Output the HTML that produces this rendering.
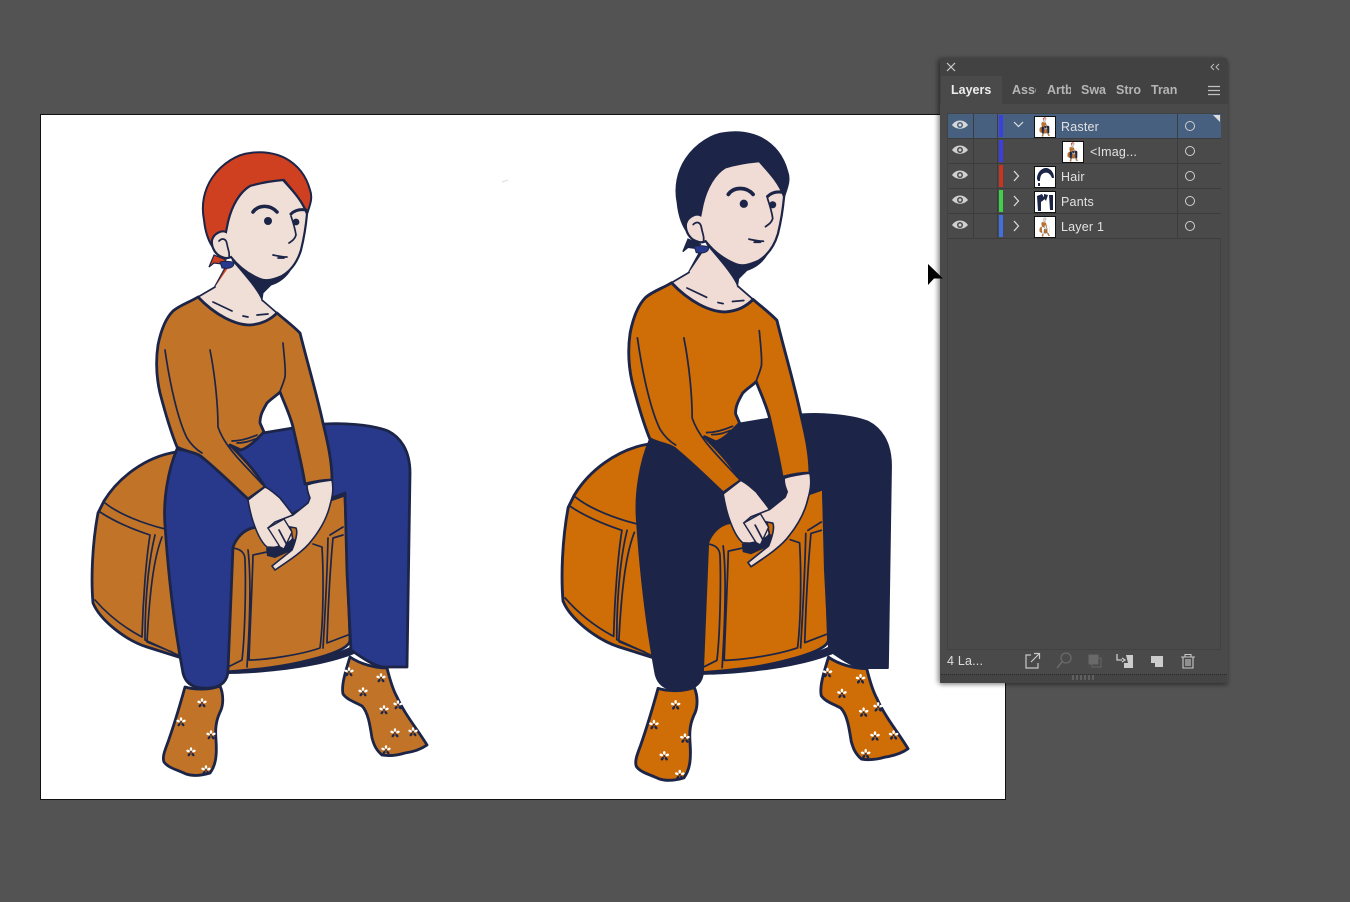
<!DOCTYPE html>
<html><head><meta charset="utf-8">
<style>
html,body{margin:0;padding:0;width:1350px;height:902px;overflow:hidden;background:#535353;font-family:"Liberation Sans",sans-serif}
#canvas{position:absolute;left:40px;top:114px;width:964px;height:684px;background:#fff;border:1px solid #111;box-sizing:content-box}
svg.art{position:absolute;left:0;top:0}
.ln{fill:none;stroke:#1c2548;stroke-width:1.7;stroke-linecap:round;stroke-linejoin:round}
.o{stroke:#1c2548;stroke-width:2.8;stroke-linejoin:round}
#panel{position:absolute;left:940px;top:58px;width:288px;height:625px;background:#4a4a4a;border-radius:4px 4px 0 0;box-shadow:-3px 0 5px rgba(0,0,0,.28),0 2px 4px rgba(0,0,0,.3)}
#head{position:absolute;left:0;top:0;width:288px;height:46px;background:#424242;border-radius:4px 4px 0 0}
#active{position:absolute;left:1px;top:18px;width:61px;height:30px;background:#4a4a4a;color:#eee;font-weight:bold;font-size:12.5px;line-height:28px;text-indent:10px}
.tab{position:absolute;top:18px;height:28px;line-height:28px;color:#b5b5b5;font-weight:bold;font-size:12.5px;overflow:hidden;white-space:nowrap}
.row{position:absolute;left:8px;width:273px;height:24px;background:#4a4a4a;border-bottom:1px solid #3c3c3c}
.row.sel{background:#47607f}
.cell{position:absolute;top:0;width:1px;height:24px;background:#3c3c3c}
.bar{position:absolute;left:51px;top:1px;width:4px;height:22px}
.name{position:absolute;top:1px;line-height:25px;font-size:12.5px;color:#e2e2e2;white-space:nowrap;letter-spacing:.2px}
.thumb{position:absolute;top:2px;width:20px;height:20px;background:#fff;border:1px solid #111;overflow:hidden}
.thumb svg{position:absolute;left:0;top:0}
.eye{position:absolute;left:3px;top:4px}
.vis{position:absolute;left:237px;top:7px;width:8px;height:8px;border:1px solid #d0d0d0;border-radius:50%}
.chev{position:absolute;top:6px}
</style></head>
<body>
<div id="canvas"></div>
<svg class="art" width="1350" height="902" viewBox="0 0 1350 902">
<defs>
<g id="fl">
<g fill="#fff">
<ellipse cx="0" cy="-3" rx="1.2" ry="1.8"/><ellipse cx="2.9" cy="-1" rx="1.2" ry="1.8" transform="rotate(70 2.9 -1)"/><ellipse cx="-2.9" cy="-1" rx="1.2" ry="1.8" transform="rotate(290 -2.9 -1)"/>
</g>
<g fill="#1c2548"><ellipse cx="1.9" cy="2.6" rx="1.2" ry="1.9" transform="rotate(144 1.9 2.6)"/><ellipse cx="-1.9" cy="2.6" rx="1.2" ry="1.9" transform="rotate(216 -1.9 2.6)"/><circle r=".9"/></g></g>
<g id="fig">
<!-- pouf -->
<path class="o" style="fill:var(--pf)" d="M176 452C145 457 118 478 104 501L98 513C92 545 91 580 93 603C100 620 125 640 147 647L182 658L176 452Z"/>
<path class="o" style="fill:var(--pf)" d="M232 548C236 535 243 531 250 528L345 495L350 640C350 648 330 655 310 660C280 668 250 670 226 672Z"/>
<path d="M226 672C260 669 320 662 352 646L354 654C320 668 260 674 226 674Z" fill="#1c2548"/>
<path class="ln" d="M105 503C120 515 145 524 165 529M100 512C115 522 135 530 150 535C146 560 143 600 142 637C125 628 108 615 95 600M155 535C150 555 145 590 145 640L178 655M162 537C155 555 150 583 147 642L172 652"/>
<path class="ln" stroke-width="2" d="M233 548C240 549 245 552 245 560C246 585 245 635 242 660L228 667M248 550C251 575 250 620 247 667M267 552L253 555C252 590 250 630 249 660C265 660 300 655 320 648C323 625 324 580 322 547L313 544M328 538C327 580 325 615 323 648M343 535L333 538C330 570 328 610 327 643L348 635M330 535L343 527"/>
<!-- pants -->
<path style="fill:var(--pt)" class="o" d="M177 449C168 470 163 500 165 525C168 570 174 625 183 673C186 685 195 689 210 688C222 687 228 680 228 670L233 547C237 536 245 530 252 528L270 525L300 510L345 493L347 573L351 650C365 660 375 666 383 667L407 667L410 473C410 450 400 437 388 431C370 424 340 423 325 424L293 428L263 433L240 450L200 453Z"/>
<!-- socks -->
<path class="o" style="fill:var(--pf)" d="M185 687C195 690 210 690 220 686C224 695 223 705 221 710C216 720 215 728 216 740C217 755 216 765 210 773C200 776 192 776 186 774C178 770 168 768 164 762C162 757 165 750 168 742C174 725 180 705 185 687Z"/>
<path class="o" style="fill:var(--pf)" d="M350 657C360 664 375 668 387 668C390 680 393 690 397 697C405 715 418 730 427 745C420 750 412 752 405 753C395 756 388 756 382 755C376 750 374 745 372 738C370 725 368 712 362 706C355 702 347 700 343 694C341 685 346 670 350 657Z"/>
<use href="#fl" x="202" y="703"/><use href="#fl" x="181" y="722"/><use href="#fl" x="211" y="735"/><use href="#fl" x="191" y="752"/><use href="#fl" x="206" y="770"/><use href="#fl" x="349" y="672"/><use href="#fl" x="381" y="678"/><use href="#fl" x="363" y="692"/><use href="#fl" x="384" y="710"/><use href="#fl" x="398" y="705"/><use href="#fl" x="395" y="733"/><use href="#fl" x="413" y="732"/><use href="#fl" x="386" y="750"/>
<!-- tail -->
<path d="M215 286L226 266L233 268C228 276 222 282 218 287Z" style="fill:var(--hr)" stroke="#1c2548" stroke-width="1.2"/>
<path d="M209 267L214 255L226 260L222 264L214 263Z" style="fill:var(--hr)" stroke="#1c2548" stroke-width="1.2"/>
<!-- neck -->
<path d="M198 297L215 287L230 265L240 262L268 285L262 293L262 300L277 313L262 323L240 325L220 315Z" style="fill:var(--sk)"/>
<path d="M232 260C243 272 255 281 267 281C276 280 284 276 291 269C286 278 278 283 271 285L263 293L262 300C258 290 245 275 232 260Z" fill="#1c2548" stroke="#1c2548"/>
<path class="ln" d="M262 300L277 313M198 297L215 287"/>
<path d="M220 262C224 261 232 261 234 263C234 268 228 269 222 268Z" fill="#28398c" stroke="#1c2548"/>
<!-- shirt -->
<path class="o" style="fill:var(--pf2)" d="M198 297C190 302 180 305 173 311C166 318 161 330 158 345C155 365 157 380 160 393C165 412 170 430 177 447C186 452 197 452 203 458C220 472 235 487 248 499L265 487C255 470 240 455 230 445L241 450C250 447 258 438 264 432L260 423C260 415 263 410 267 403C272 398 276 396 280 392C285 405 290 415 293 427C297 445 302 465 305 484C313 482 322 480 332 480C332 460 327 440 323 423C317 395 308 365 300 333C292 325 285 320 277 313C270 320 262 324 250 325C235 325 215 315 198 297Z"/>
<path class="ln" d="M165 350C170 385 178 420 187 438C192 446 197 450 202 453M210 350C215 375 218 405 218 427C225 448 245 465 262 484M283 343C284 355 286 370 285 377C283 385 280 390 280 392M232 441C240 441 250 438 257 435M237 443C245 443 250 441 255 439"/>
<!-- hair -->
<path style="fill:var(--hr)" stroke="#1c2548" stroke-width="2" d="M307 214C310 205 313 198 310 190C306 175 298 165 285 158C275 153 262 151 250 153C238 154 222 163 212 178C204 190 201 205 204 220C205 230 207 238 212 246L228 232C230 215 238 195 250 186C262 183 272 182 284 180C292 190 302 200 307 214Z"/>
<!-- face -->
<path style="fill:var(--sk)" stroke="#1c2548" stroke-width="2.2" d="M283 180C272 181 260 183 250 186C240 192 232 205 228 222L226 232C222 230 214 233 212 240C211 248 216 255 222 257C226 259 229 258 231 257C238 266 248 274 260 279C267 282 275 279 282 276C292 270 298 260 301 250C304 238 306 225 307 214C302 200 292 190 283 180Z"/>
<path class="ln" d="M219 241C222 238 226 238 227 244C228 250 230 253 229 256"/>
<path d="M253 212C258 205 270 204 277 212" fill="none" stroke="#1c2548" stroke-width="3.6" stroke-linecap="round"/>
<path d="M291 214C295 210 300 209 306 210" fill="none" stroke="#1c2548" stroke-width="3" stroke-linecap="round"/>
<circle cx="268" cy="221" r="4" fill="#1c2548"/><circle cx="296" cy="222" r="3.4" fill="#1c2548"/>
<path class="ln" d="M291 216C293 222 295 228 296 235C295 239 292 241 289 243M273 255C278 256 282 257 287 257M278 258L284 258"/>
<path class="ln" stroke-width="1.2" d="M213 302L232 311M243 316L248 317M257 315L268 314"/>
<!-- hands -->
<path style="fill:var(--sk)" stroke="#1c2548" stroke-width="1.6" stroke-linejoin="round" d="M265 487L248 500C250 512 253 522 255 527C258 535 262 543 267 547L285 548L293 540L290 525L293 515C288 508 283 502 280 498C274 493 270 489 265 487Z"/>
<path d="M266 548C272 547 288 545 292 538L296 540L293 550L275 558L267 556Z" fill="#1c2548"/>
<path style="fill:var(--sk)" stroke="#1c2548" stroke-width="1.6" stroke-linejoin="round" d="M307 485C315 482 325 481 332 480C334 490 332 498 330 505C327 518 320 530 312 540C305 550 290 560 275 570L272 566L292 550C296 540 298 532 296 528L285 526L275 528L270 528L268 528L275 522L293 515L308 503L310 498C308 493 307 490 307 485Z"/>
<path style="fill:var(--sk)" stroke="#1c2548" stroke-width="1.4" d="M268 528L284 519L292 532L284 549L280 547Z"/>
<path class="ln" d="M279 530L288 547"/>
</g>
</defs>
<path d="M502 182L508 180" stroke="#ddd" stroke-width="1"/>
<use href="#fig" style="--pf:#c17428;--pf2:#c17428;--pt:#28398c;--hr:#cf4020;--sk:#efdfd6"/>
<g transform="translate(562 132) scale(1.033 1.04) translate(-92 -152)">
<use href="#fig" style="--pf:#cf6d06;--pf2:#cf6d06;--pt:#1c2548;--hr:#1c2548;--sk:#f1dcd5"/>
</g>
</svg>

<div id="panel">
<div id="head"></div>
<svg style="position:absolute;left:6px;top:4px" width="10" height="10"><path d="M1 1L9 9M9 1L1 9" stroke="#ccc" stroke-width="1.2"/></svg>
<svg style="position:absolute;left:270px;top:5px" width="10" height="8"><path d="M4 1L1 4L4 7M9 1L6 4L9 7" fill="none" stroke="#bbb" stroke-width="1"/></svg>
<div id="active">Layers</div>
<div class="tab" style="left:72px;width:24px">Asse</div>
<div class="tab" style="left:107px;width:24px">Artb</div>
<div class="tab" style="left:141px;width:26px">Swa</div>
<div class="tab" style="left:176px;width:25px">Stro</div>
<div class="tab" style="left:211px;width:29px">Tran</div>
<svg style="position:absolute;left:268px;top:27px" width="13" height="11"><path d="M0 1.5H12M0 5.500H12M0 9.500H12" stroke="#c0c0c0" stroke-width="1.3"/></svg>

<div style="position:absolute;left:7px;top:55px;width:274px;height:537px;border:1px solid #424242;box-sizing:border-box"></div>

<div class="row sel" style="top:56px;height:24px">
 <svg class="eye" width="18" height="14"><path d="M1 7C5 1 13 1 17 7C13 12 5 12 1 7Z" fill="#d8d8d8"/><circle cx="9" cy="7" r="3" fill="#47607f"/><circle cx="9" cy="7" r="1.5" fill="#d8d8d8"/></svg>
 <div class="cell" style="left:25px"></div><div class="cell" style="left:49px"></div>
 <div class="bar" style="background:#3a3fe0"></div>
 <svg class="chev" style="left:65px" width="11" height="9"><path d="M1 2L5.500 6.500L10 2" fill="none" stroke="#ddd" stroke-width="1.2"/></svg>
 <div class="thumb" style="left:86px"><svg width="20" height="20" viewBox="140 140 260 650"><use href="#fig" style="--pf:#c17428;--pf2:#c17428;--pt:#1c2548;--hr:#cf4020;--sk:#efdfd6"/></svg></div>
 <div class="name" style="left:113px">Raster</div>
 <div class="cell" style="left:229px"></div>
 <div class="vis"></div>
 <svg style="position:absolute;right:1px;top:1px" width="7" height="7"><path d="M0 0H7V7Z" fill="#ddd"/></svg>
</div>
<div class="row" style="top:81px">
 <svg class="eye" width="18" height="14"><path d="M1 7C5 1 13 1 17 7C13 12 5 12 1 7Z" fill="#d0d0d0"/><circle cx="9" cy="7" r="3" fill="#4a4a4a"/><circle cx="9" cy="7" r="1.5" fill="#d0d0d0"/></svg>
 <div class="cell" style="left:25px"></div><div class="cell" style="left:49px"></div>
 <div class="bar" style="background:#3a3fe0"></div>
 <div class="thumb" style="left:114px"><svg width="20" height="20" viewBox="140 140 260 650"><use href="#fig" style="--pf:#c17428;--pf2:#c17428;--pt:#1c2548;--hr:#cf4020;--sk:#efdfd6"/></svg></div>
 <div class="name" style="left:142px">&lt;Imag...</div>
 <div class="cell" style="left:229px"></div>
 <div class="vis"></div>
</div>
<div class="row" style="top:106px">
 <svg class="eye" width="18" height="14"><path d="M1 7C5 1 13 1 17 7C13 12 5 12 1 7Z" fill="#d0d0d0"/><circle cx="9" cy="7" r="3" fill="#4a4a4a"/><circle cx="9" cy="7" r="1.5" fill="#d0d0d0"/></svg>
 <div class="cell" style="left:25px"></div><div class="cell" style="left:49px"></div>
 <div class="bar" style="background:#c8341e"></div>
 <svg class="chev" style="left:64px" width="8" height="12"><path d="M2 1L6.500 6L2 11" fill="none" stroke="#ddd" stroke-width="1.2"/></svg>
 <div class="thumb" style="left:86px"><svg width="20" height="20" viewBox="0 0 20 20"><path d="M2 12C2 5 7 1 11 1C15 1 19 5 19 11L17 11C15 6 12 5 9 6C6 7 5 10 5 14L3 14ZM3 16L5 16L5 19L3 19Z" fill="#1c2548"/></svg></div>
 <div class="name" style="left:113px">Hair</div>
 <div class="cell" style="left:229px"></div>
 <div class="vis"></div>
</div>
<div class="row" style="top:131px">
 <svg class="eye" width="18" height="14"><path d="M1 7C5 1 13 1 17 7C13 12 5 12 1 7Z" fill="#d0d0d0"/><circle cx="9" cy="7" r="3" fill="#4a4a4a"/><circle cx="9" cy="7" r="1.5" fill="#d0d0d0"/></svg>
 <div class="cell" style="left:25px"></div><div class="cell" style="left:49px"></div>
 <div class="bar" style="background:#3fd04a"></div>
 <svg class="chev" style="left:64px" width="8" height="12"><path d="M2 1L6.500 6L2 11" fill="none" stroke="#ddd" stroke-width="1.2"/></svg>
 <div class="thumb" style="left:86px"><svg width="20" height="20" viewBox="0 0 20 20"><path d="M2 4L7 2L10 7L6 10L6 19L3 19ZM9 2L13 3L11 9L9 6ZM14 3L18 3L18 18L15 18Z" fill="#1c2548"/></svg></div>
 <div class="name" style="left:113px">Pants</div>
 <div class="cell" style="left:229px"></div>
 <div class="vis"></div>
</div>
<div class="row" style="top:156px">
 <svg class="eye" width="18" height="14"><path d="M1 7C5 1 13 1 17 7C13 12 5 12 1 7Z" fill="#d0d0d0"/><circle cx="9" cy="7" r="3" fill="#4a4a4a"/><circle cx="9" cy="7" r="1.5" fill="#d0d0d0"/></svg>
 <div class="cell" style="left:25px"></div><div class="cell" style="left:49px"></div>
 <div class="bar" style="background:#3f6fe0"></div>
 <svg class="chev" style="left:64px" width="8" height="12"><path d="M2 1L6.500 6L2 11" fill="none" stroke="#ddd" stroke-width="1.2"/></svg>
 <div class="thumb" style="left:86px"><svg width="20" height="20" viewBox="140 140 260 650"><use href="#fig" style="--pf:#c17428;--pf2:#c17428;--pt:#fff;--hr:#ddd;--sk:#efdfd6"/></svg></div>
 <div class="name" style="left:113px">Layer 1</div>
 <div class="cell" style="left:229px"></div>
 <div class="vis"></div>
</div>

<div class="name" style="left:7px;top:591px;color:#ddd;font-size:12.5px">4 La...</div>
<svg style="position:absolute;left:80px;top:593px" width="190" height="20">
 <path d="M11 4H6V17H18V12M11 11L19 3M14 2.500H19.500V8" fill="none" stroke="#c8c8c8" stroke-width="1.2"/>
 <circle cx="46" cy="7" r="5" fill="none" stroke="#6a6a6a" stroke-width="1.3"/><path d="M42 11L37 17" stroke="#6a6a6a" stroke-width="1.6"/>
 <rect x="69" y="4" width="9" height="9" fill="#6a6a6a" stroke="#666"/><rect x="72" y="7" width="9" height="9" fill="none" stroke="#666"/>
 <path d="M97 3V9H102M102 7L105 9L102 11" fill="none" stroke="#ccc" stroke-width="1.3"/><path d="M106 4H113V17H104V12H108Z" fill="#ccc"/>
 <path d="M131 5H143V16H135V12H131Z" fill="#ccc"/>
 <path d="M161 6H175M165 6V3.500H171V6M163 6V17H173V6M166 8V15M168 8V15M170 8V15" fill="none" stroke="#c8c8c8" stroke-width="1.1"/>
</svg>
<div style="position:absolute;left:1px;top:616px;width:286px;height:9px;border-top:1px dotted #2a2a2a;background:#444;box-sizing:border-box"></div>
<div style="position:absolute;left:132px;top:617px;width:23px;height:5px;background:repeating-linear-gradient(90deg,#5f5f5f 0 2px,#444 2px 4px)"></div>
</div>

<svg style="position:absolute;left:926px;top:263px" width="20" height="24"><path d="M2 1L2 22L8 15.500L17 15.500Z" fill="#000"/></svg>
</body></html>
